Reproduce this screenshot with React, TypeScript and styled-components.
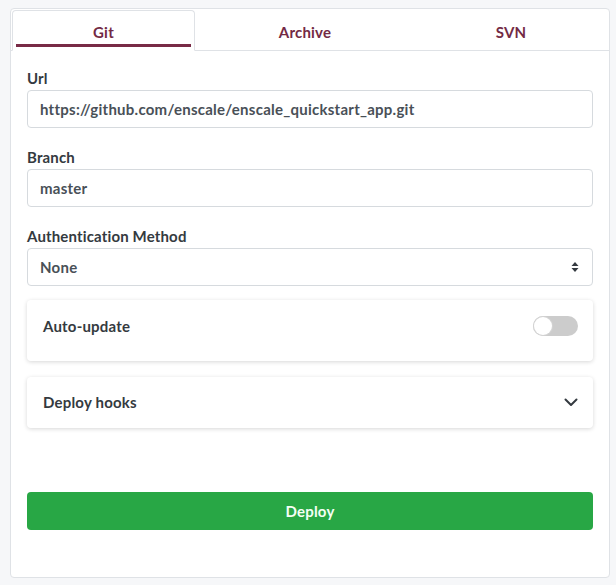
import React from "react";
import styled, { createGlobalStyle } from "styled-components";

const GlobalStyle = createGlobalStyle`
  html, body {
    margin: 0;
    padding: 0;
    background: #f6f7f9;
    font-family: Lato, "Noto Sans", "DejaVu Sans", sans-serif;
    -webkit-font-smoothing: antialiased;
  }
  * { box-sizing: border-box; }
`;

const Page = styled.div`
  padding: 8px 0 0 10px;
  min-height: 585px;
`;

const Card = styled.div`
  width: 600px;
  background: #fff;
  border: 1px solid #dfe2e6;
  border-radius: 4px;
`;

const TabNav = styled.div`
  display: flex;
  padding: 1px 1px 0;
  border-bottom: 1px solid #dfe2e6;
`;

const Tab = styled.div<{ $active?: boolean; $width: number }>`
  flex: 0 0 ${(p) => p.$width}px;
  padding: 0 3px 3px;
  margin-bottom: -1px;
  border: 1px solid ${(p) => (p.$active ? "#dfe2e6" : "transparent")};
  border-bottom-color: ${(p) => (p.$active ? "#fff" : "transparent")};
  border-radius: 4px 4px 0 0;
  background: ${(p) => (p.$active ? "#fff" : "transparent")};
  cursor: pointer;
`;

const TabLabel = styled.span<{ $active?: boolean }>`
  display: block;
  padding: 12px 0 3px;
  line-height: 18px;
  text-align: center;
  font-size: 15px;
  font-weight: 700;
  letter-spacing: 0.2px;
  color: #732a44;
  border-bottom: 3px solid ${(p) => (p.$active ? "#782a46" : "transparent")};
`;

const Body = styled.div`
  padding: 17px 16px 47px;
`;

const FieldStack = styled.div`
  display: flex;
  flex-direction: column;
  gap: 19px;
`;

const Field = styled.div`
  display: flex;
  flex-direction: column;
`;

const Label = styled.label`
  display: block;
  margin-bottom: 2px;
  font-size: 15px;
  line-height: 20px;
  font-weight: 700;
  letter-spacing: 0.15px;
  color: #343a40;
`;

const InputBox = styled.div`
  display: flex;
  align-items: center;
  justify-content: space-between;
  height: 38px;
  padding: 0 13px 0 12px;
  border: 1px solid #d6dade;
  border-radius: 4px;
  background: #fff;
  font-size: 15px;
  font-weight: 700;
  letter-spacing: 0.25px;
  color: #495057;
`;

const PanelStack = styled.div`
  margin-top: 14px;
  display: flex;
  flex-direction: column;
  gap: 16px;
`;

const Panel = styled.div<{ $height: number; $padTop: number }>`
  height: ${(p) => p.$height}px;
  padding: ${(p) => p.$padTop}px 15px 0 16px;
  background: #fff;
  border-radius: 4px;
  box-shadow: 0 1px 4px rgba(0, 0, 0, 0.16);
`;

const PanelRow = styled.div`
  display: flex;
  align-items: center;
  justify-content: space-between;
  height: 24px;
`;

const PanelTitle = styled.span`
  font-size: 15px;
  font-weight: 700;
  letter-spacing: 0.2px;
  color: #343a40;
`;

const Toggle = styled.span`
  display: flex;
  align-items: center;
  width: 45px;
  height: 20px;
  padding: 1px;
  border-radius: 10px;
  background: #cccccc;
`;

const Knob = styled.span`
  width: 18px;
  height: 18px;
  border-radius: 50%;
  background: #fff;
  box-shadow: 0 0 0 1px #d4d4d4;
`;

const DeployButton = styled.button`
  display: block;
  width: 100%;
  height: 38px;
  margin-top: 64px;
  border: none;
  border-radius: 4px;
  background: #28a745;
  color: #f4fff4;
  font-family: inherit;
  font-size: 15px;
  font-weight: 700;
  letter-spacing: 0.2px;
  cursor: pointer;
`;

const SelectArrows = () => (
  <svg width="8" height="12" viewBox="0 0 8 12" aria-hidden>
    <path d="M4 1 L7.5 5 H0.5 Z" fill="#343a40" />
    <path d="M4 11 L7.5 7 H0.5 Z" fill="#343a40" />
  </svg>
);

const Chevron = () => (
  <svg width="14" height="9" viewBox="0 0 14 9" aria-hidden>
    <path
      d="M1.5 1.5 L7 7 L12.5 1.5"
      fill="none"
      stroke="#343a40"
      strokeWidth="2"
      strokeLinecap="round"
      strokeLinejoin="round"
    />
  </svg>
);

const tabs = [
  { name: "Git", width: 183, active: true },
  { name: "Archive", width: 220, active: false },
  { name: "SVN", width: 192, active: false },
];

export default function App() {
  return (
    <>
      <GlobalStyle />
      <Page>
        <Card>
          <TabNav>
            {tabs.map((t) => (
              <Tab key={t.name} $active={t.active} $width={t.width}>
                <TabLabel $active={t.active}>{t.name}</TabLabel>
              </Tab>
            ))}
          </TabNav>
          <Body>
            <FieldStack>
              <Field>
                <Label>Url</Label>
                <InputBox>https://github.com/enscale/enscale_quickstart_app.git</InputBox>
              </Field>
              <Field>
                <Label>Branch</Label>
                <InputBox>master</InputBox>
              </Field>
              <Field>
                <Label>Authentication Method</Label>
                <InputBox>
                  <span>None</span>
                  <SelectArrows />
                </InputBox>
              </Field>
            </FieldStack>
            <PanelStack>
              <Panel $height={61} $padTop={14}>
                <PanelRow>
                  <PanelTitle>Auto-update</PanelTitle>
                  <Toggle>
                    <Knob />
                  </Toggle>
                </PanelRow>
              </Panel>
              <Panel $height={51} $padTop={13}>
                <PanelRow>
                  <PanelTitle>Deploy hooks</PanelTitle>
                  <Chevron />
                </PanelRow>
              </Panel>
            </PanelStack>
            <DeployButton>Deploy</DeployButton>
          </Body>
        </Card>
      </Page>
    </>
  );
}
